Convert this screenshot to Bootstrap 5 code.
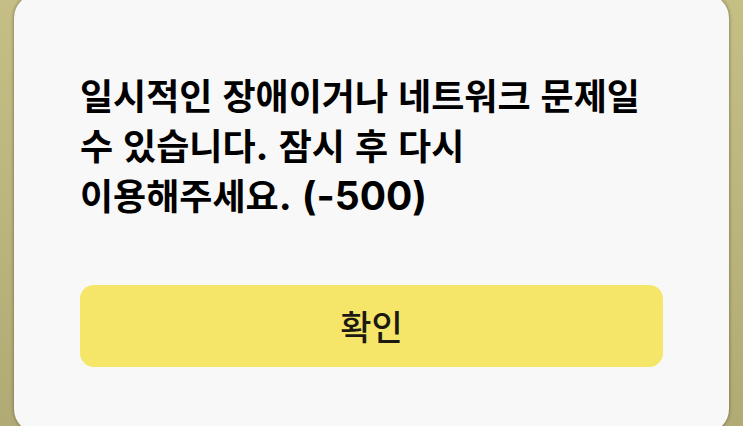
<!DOCTYPE html>
<html lang="ko">
<head>
<meta charset="utf-8">
<meta name="viewport" content="width=device-width, initial-scale=1">
<title>알림</title>
<link href="https://cdn.jsdelivr.net/npm/bootstrap@5.3.0/dist/css/bootstrap.min.css" rel="stylesheet">
<style>
body { font-family: "Liberation Sans", "Noto Sans CJK KR", sans-serif; background: linear-gradient(#c5bf86, #b2aa75); overflow: hidden; }
.notice { background: #f8f8f8; border-radius: 24px; margin: -6px 14px -6px; padding: 79px 66px 66px; box-shadow: 0 0 3px 1px rgba(70, 65, 30, .4); }
.notice-text { font-size: 36px; line-height: 50px; font-weight: 700; color: #000; margin-bottom: 62px; }
.latin { font-family: Inter, sans-serif; font-size: 39px; line-height: 1; }
.btn-confirm, .btn-confirm:hover { background: #f5e669; color: #1c1a10; border: 0; border-radius: 14px; font-size: 34px; font-weight: 500; line-height: 50px; padding: 18px 16px 14px; }
</style>
</head>
<body class="min-vh-100">
<main class="notice" role="alertdialog" aria-labelledby="notice-text">
<p id="notice-text" class="notice-text">일시적인 장애이거나 네트워크 문제일<br>수 있습니다<span class="latin">.</span> 잠시 후 다시<br>이용해주세요<span class="latin">.</span> <span class="latin">(-500)</span></p>
<button type="button" class="btn btn-confirm w-100">확인</button>
</main>
<script src="https://cdn.jsdelivr.net/npm/bootstrap@5.3.0/dist/js/bootstrap.bundle.min.js"></script>
</body>
</html>
